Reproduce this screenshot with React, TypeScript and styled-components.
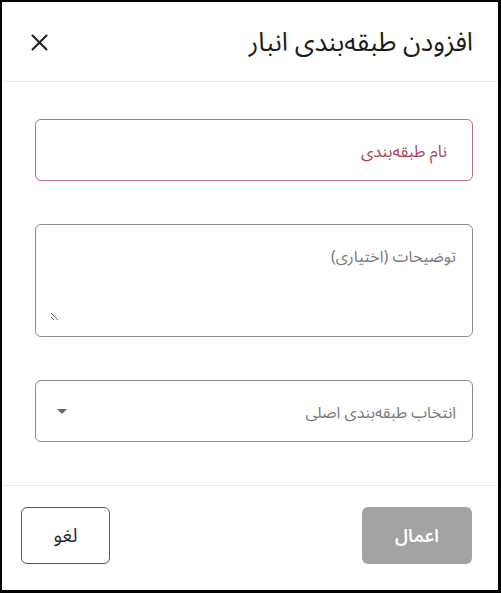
import { FC } from 'react';
import styled, { createGlobalStyle } from 'styled-components';

const GlobalStyle = createGlobalStyle`
	* {
		box-sizing: border-box;
	}
	html, body {
		margin: 0;
		padding: 0;
		background: #ffffff;
	}
	body {
		font-family: "Noto Sans Arabic", Vazirmatn, "DejaVu Sans", sans-serif;
	}
`;

const Frame = styled.div`
	width: 501px;
	height: 593px;
	border-style: solid;
	border-color: #000000;
	border-width: 2px 3px 3px 2px;
	background: #ffffff;
	display: flex;
	flex-direction: column;
	direction: rtl;
`;

const Header = styled.header`
	height: 80px;
	display: flex;
	align-items: center;
	justify-content: space-between;
	padding: 2px 25px 0 26px;
	border-bottom: 1px solid #e8e8e8;
`;

const Title = styled.h2`
	margin: 0;
	font-size: 26px;
	font-weight: 400;
	color: #1c1c1c;
`;

const CloseButton = styled.button`
	display: flex;
	align-items: center;
	justify-content: center;
	width: 22px;
	height: 22px;
	padding: 0;
	border: none;
	background: none;
	color: #222222;
	cursor: pointer;
`;

const Body = styled.div`
	flex: 1;
	display: flex;
	flex-direction: column;
	gap: 43px;
	padding: 37px 25px 0 33px;
`;

const Field = styled.div<{ $error?: boolean }>`
	display: flex;
	align-items: center;
	height: 62px;
	padding: 0 16px;
	border: 1px solid ${({ $error }) => ($error ? '#bd6c79' : '#8c8c8c')};
	border-radius: 6px;
`;

const FieldLabel = styled.span<{ $error?: boolean }>`
	font-size: ${({ $error }) => ($error ? '16.5px' : '16px')};
	color: ${({ $error }) => ($error ? '#a8485a' : '#7a7a7a')};
	padding-right: ${({ $error }) => ($error ? '9px' : '0')};
	padding-top: 3px;
`;

const AreaBox = styled.div`
	height: 113px;
	padding: 20px 14px 15px;
	border: 1px solid #8c8c8c;
	border-radius: 6px;
	display: flex;
`;

const TextArea = styled.textarea`
	flex: 1;
	border: none;
	outline: none;
	padding: 0 2px 0 0;
	margin: 0;
	font-family: inherit;
	font-size: 16px;
	line-height: 24px;
	direction: rtl;
	color: #222222;
	background: transparent;
	&::placeholder {
		color: #7a7a7a;
	}
`;

const SelectBox = styled(Field)`
	justify-content: space-between;
	cursor: pointer;
`;

const Caret = styled.span`
	display: flex;
	color: #666666;
	margin-left: -2px;
`;

const Footer = styled.footer`
	height: 105px;
	display: flex;
	align-items: flex-start;
	justify-content: space-between;
	padding: 21px 26px 0 19px;
	border-top: 1px solid #e8e8e8;
`;

const Button = styled.button<{ $primary?: boolean }>`
	height: 57px;
	width: ${({ $primary }) => ($primary ? '110px' : '89px')};
	border-radius: 6px;
	border: ${({ $primary }) => ($primary ? 'none' : '1px solid #555a63')};
	background: ${({ $primary }) => ($primary ? '#a3a3a3' : '#ffffff')};
	color: ${({ $primary }) => ($primary ? '#ffffff' : '#1f2937')};
	font-family: inherit;
	font-size: ${({ $primary }) => ($primary ? '18px' : '19px')};
	font-weight: ${({ $primary }) => ($primary ? 600 : 400)};
	cursor: pointer;
`;

const App: FC = () => (
	<>
		<GlobalStyle />
		<Frame>
			<Header>
				<Title>افزودن طبقه‌بندی انبار</Title>
				<CloseButton aria-label="بستن">
					<svg width="21" height="21" viewBox="0 0 24 24" fill="none">
						<path
							d="M4 4l16 16M20 4L4 20"
							stroke="currentColor"
							strokeWidth="2.4"
							strokeLinecap="round"
						/>
					</svg>
				</CloseButton>
			</Header>
			<Body>
				<Field $error>
					<FieldLabel $error>نام طبقه‌بندی</FieldLabel>
				</Field>
				<AreaBox>
					<TextArea placeholder="توضیحات (اختیاری)" />
				</AreaBox>
				<SelectBox>
					<FieldLabel>انتخاب طبقه‌بندی اصلی</FieldLabel>
					<Caret>
						<svg width="24" height="24" viewBox="0 0 24 24" fill="currentColor">
							<path d="M7 10l5 5 5-5z" />
						</svg>
					</Caret>
				</SelectBox>
			</Body>
			<Footer>
				<Button $primary>اعمال</Button>
				<Button>لغو</Button>
			</Footer>
		</Frame>
	</>
);

export default App;
